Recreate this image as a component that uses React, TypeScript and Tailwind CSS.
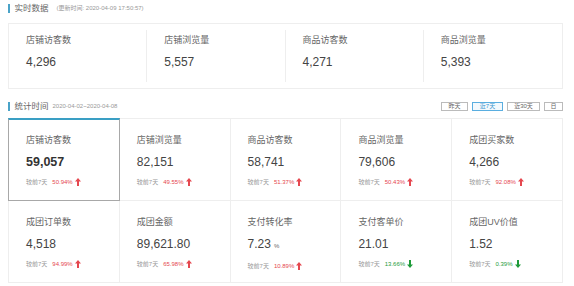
import React from 'react';

type Stat = {
  label: string;
  value: string;
  unit?: string;
  pct: string;
  up: boolean;
};

const realtime = [
  { label: '店铺访客数', value: '4,296' },
  { label: '店铺浏览量', value: '5,557' },
  { label: '商品访客数', value: '4,271' },
  { label: '商品浏览量', value: '5,393' },
];

const stats: Stat[] = [
  { label: '店铺访客数', value: '59,057', pct: '50.94%', up: true },
  { label: '店铺浏览量', value: '82,151', pct: '49.55%', up: true },
  { label: '商品访客数', value: '58,741', pct: '51.37%', up: true },
  { label: '商品浏览量', value: '79,606', pct: '50.43%', up: true },
  { label: '成团买家数', value: '4,266', pct: '92.08%', up: true },
  { label: '成团订单数', value: '4,518', pct: '94.99%', up: true },
  { label: '成团金额', value: '89,621.80', pct: '65.98%', up: true },
  { label: '支付转化率', value: '7.23', unit: '%', pct: '10.89%', up: true },
  { label: '支付客单价', value: '21.01', pct: '13.66%', up: false },
  { label: '成团UV价值', value: '1.52', pct: '0.39%', up: false },
];

function Arrow({ up }: { up: boolean }) {
  return (
    <svg width="6" height="8" viewBox="0 0 6 8" className="ml-[2px]">
      {up ? (
        <path d="M3 0 L6 3.5 H4 V8 H2 V3.5 H0 Z" fill="#e5474f" />
      ) : (
        <path d="M3 8 L6 4.5 H4 V0 H2 V4.5 H0 Z" fill="#1e9b3a" />
      )}
    </svg>
  );
}

export default function App() {
  return (
    <div className="w-[574px] h-[286px] bg-white pt-[4px] pl-[8px] font-['Liberation_Sans','Noto_Sans_CJK_SC',sans-serif] text-[#333] overflow-hidden">
      {/* 实时数据 */}
      <div className="flex items-center h-[9px]">
        <div className="w-[1.5px] h-[9px] bg-[#4aa3c8]" />
        <span className="ml-[5px] text-[8.5px] leading-[9px] text-[#666]">实时数据</span>
        <span className="ml-[8px] text-[6px] leading-[9px] text-[#999]">(更新时间: 2020-04-09 17:50:57)</span>
      </div>

      <div className="mt-[10px] w-[555px] h-[66px] border border-[#eeeeee] py-[6px] grid grid-cols-4">
        {realtime.map((r, i) => (
          <div
            key={r.label}
            className={`h-[52px] pt-[5px] pl-[17px] ${i < 3 ? 'border-r border-[#eeeeee]' : ''}`}
          >
            <div className="text-[9px] leading-[10px] text-[#666]">{r.label}</div>
            <div className="mt-[10px] text-[12px] leading-[14px] text-[#444]">{r.value}</div>
          </div>
        ))}
      </div>

      {/* 统计时间 */}
      <div className="mt-[12px] w-[555px] flex items-center justify-between h-[10px]">
        <div className="flex items-center">
          <div className="w-[1.5px] h-[9px] bg-[#4aa3c8]" />
          <span className="ml-[5px] text-[8.5px] leading-[9px] text-[#666]">统计时间</span>
          <span className="ml-[4px] text-[6px] leading-[9px] text-[#999]">2020-04-02~2020-04-08</span>
        </div>
        <div className="flex items-center gap-[4px]">
          <div className="w-[27px] h-[9px] border border-[#bbb] text-[6px] leading-[7px] text-[#666] text-center">昨天</div>
          <div className="w-[31px] h-[9px] border border-[#5aaee0] bg-[#f3f9fd] text-[6px] leading-[7px] text-[#3d97cf] text-center">近7天</div>
          <div className="w-[33px] h-[9px] border border-[#bbb] text-[6px] leading-[7px] text-[#666] text-center">近30天</div>
          <div className="w-[19px] h-[9px] border border-[#bbb] text-[6px] leading-[7px] text-[#666] text-center">日</div>
        </div>
      </div>

      <div className="mt-[7px] w-[555px] grid grid-cols-5 border-l border-t border-[#eeeeee]">
        {stats.map((s, i) =>
          i === 0 ? (
            <div
              key={s.label}
              className="h-[83px] -ml-px -mt-px border border-[#a8a8a8] border-t-2 border-t-[#3a9fc4] pt-[15px] pl-[17px]"
            >
              <div className="text-[9px] leading-[10px] text-[#666]">{s.label}</div>
              <div className="mt-[10px] text-[12.5px] leading-[14px] font-bold text-[#333]">{s.value}</div>
              <div className="mt-[9px] flex items-center text-[6px] leading-[8px]">
                <span className="text-[#999]">较前7天</span>
                <span className="ml-[5px] text-[#e5474f]">{s.pct}</span>
                <Arrow up={s.up} />
              </div>
            </div>
          ) : (
            <div
              key={s.label}
              className="h-[82px] border-r border-b border-[#eeeeee] pt-[16px] pl-[17px]"
            >
              <div className="text-[9px] leading-[10px] text-[#666]">{s.label}</div>
              <div className="mt-[10px] text-[12px] leading-[14px] text-[#444] flex items-baseline">
                {s.value}
                {s.unit && <span className="ml-[3px] text-[6px] text-[#666]">{s.unit}</span>}
              </div>
              <div className="mt-[9px] flex items-center text-[6px] leading-[8px]">
                <span className="text-[#999]">较前7天</span>
                <span className={`ml-[5px] ${s.up ? 'text-[#e5474f]' : 'text-[#1e9b3a]'}`}>{s.pct}</span>
                <Arrow up={s.up} />
              </div>
            </div>
          )
        )}
      </div>
    </div>
  );
}
